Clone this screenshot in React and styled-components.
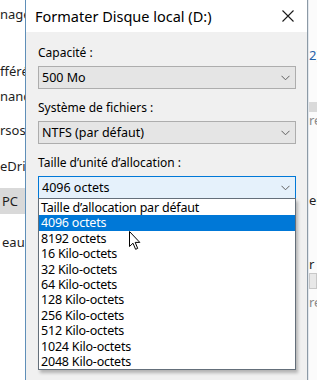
import React from "react";
import styled, { createGlobalStyle } from "styled-components";

const GlobalStyle = createGlobalStyle`
  html, body {
    margin: 0;
    padding: 0;
    background: #ffffff;
  }
  body {
    font-family: "Noto Sans", "Open Sans", sans-serif;
    color: #000;
  }
`;

const Screen = styled.div`
  display: flex;
  width: 317px;
  height: 380px;
  overflow: hidden;
  background: #ffffff;
`;

const NavPane = styled.div`
  flex: none;
  width: 25px;
  display: flex;
  flex-direction: column;
  overflow: hidden;
  background: #ffffff;
`;

const NavItem = styled.div`
  margin-top: ${(p) => p.$gap}px;
  height: ${(p) => p.$h || 20}px;
  line-height: ${(p) => p.$h || 20}px;
  padding-left: ${(p) => p.$indent || 0}px;
  white-space: nowrap;
  font-size: 13px;
  color: #1e1e1e;
  background: ${(p) => (p.$selected ? "#d9d9d9" : "transparent")};
`;

const Dialog = styled.div`
  flex: none;
  width: 281px;
  display: flex;
  flex-direction: column;
  background: #f0f0f0;
  border-left: 1px solid #5f8fb8;
  border-right: 1px solid #8c9aa6;
`;

const TitleBar = styled.div`
  height: 32px;
  flex: none;
  display: flex;
  align-items: center;
  justify-content: space-between;
  padding: 0 13px 0 9px;
  background: #ffffff;
`;

const Title = styled.div`
  font-size: 14.5px;
  color: #000;
`;

const Body = styled.div`
  padding: 2px 11px 0 12px;
`;

const Field = styled.div`
  position: relative;
  margin-top: 11px;
`;

const Label = styled.div`
  font-size: 12px;
  line-height: 16px;
  margin-bottom: 5px;
`;

const Combo = styled.div`
  height: 21px;
  display: flex;
  align-items: center;
  justify-content: space-between;
  padding: 0 5px 0 3px;
  font-size: 12.5px;
  border: 1px solid ${(p) => (p.$focused ? "#0078d7" : "#adadad")};
  background: ${(p) => (p.$focused ? "#e5f1fb" : "#e5e5e5")};
`;

const DropList = styled.div`
  position: absolute;
  top: 100%;
  left: 0;
  right: 0;
  margin-top: -1px;
  padding: 1px 0 0;
  background: #ffffff;
  border: 1px solid #646f7a;
  box-shadow: 2px 3px 3px rgba(0, 0, 0, 0.25);
  z-index: 2;
`;

const Option = styled.div`
  height: 15.4px;
  line-height: 15.4px;
  padding-left: 2px;
  font-size: 12.5px;
  letter-spacing: -0.2px;
  white-space: nowrap;
  color: ${(p) => (p.$selected ? "#ffffff" : "#000000")};
  background: ${(p) => (p.$selected ? "#0078d7" : "transparent")};
`;

const Pointer = styled.svg`
  position: absolute;
  left: 91px;
  top: 76px;
  z-index: 3;
`;

const RightPane = styled.div`
  flex: 1;
  display: flex;
  flex-direction: column;
  overflow: hidden;
  background: #fbfbfb;
  border-left: 1px solid #e3e8ee;
`;

const Bit = styled.div`
  margin-top: ${(p) => p.$gap}px;
  height: ${(p) => p.$h}px;
  line-height: ${(p) => p.$h}px;
  font-size: 13px;
  white-space: nowrap;
  color: ${(p) => p.$color || "#1e1e1e"};
  background: ${(p) => p.$bg || "transparent"};
  border: ${(p) => (p.$boxed ? "1px solid #c8c8c8" : "none")};
`;

const Chevron = () => (
  <svg width="9" height="6" viewBox="0 0 9 6">
    <path d="M0.5 0.8 L4.5 4.8 L8.5 0.8" fill="none" stroke="#606060" strokeWidth="1" />
  </svg>
);

const CloseIcon = () => (
  <svg width="12" height="12" viewBox="0 0 12 12">
    <path d="M0.5 0.5 L11.5 11.5 M11.5 0.5 L0.5 11.5" stroke="#1a1a1a" strokeWidth="1.1" />
  </svg>
);

const sizes = [
  "Taille d\u2019allocation par défaut",
  "4096 octets",
  "8192 octets",
  "16 Kilo-octets",
  "32 Kilo-octets",
  "64 Kilo-octets",
  "128 Kilo-octets",
  "256 Kilo-octets",
  "512 Kilo-octets",
  "1024 Kilo-octets",
  "2048 Kilo-octets",
];

const nav = [
  { text: "nage", gap: 4 },
  { text: "fféré", gap: 37 },
  { text: "nanc", gap: 5 },
  { text: "rsos", gap: 14 },
  { text: "eDriv", gap: 16 },
  { text: "PC", gap: 12, h: 26, selected: true, indent: 2 },
  { text: "eau", gap: 18, indent: 2 },
];

export default function App() {
  return (
    <>
      <GlobalStyle />
      <Screen>
        <NavPane>
          {nav.map((n) => (
            <NavItem key={n.text} $gap={n.gap} $h={n.h} $selected={n.selected} $indent={n.indent}>
              {n.text}
            </NavItem>
          ))}
        </NavPane>

        <Dialog>
          <TitleBar>
            <Title>Formater Disque local (D:)</Title>
            <CloseIcon />
          </TitleBar>
          <Body>
            <Field>
              <Label>Capacité :</Label>
              <Combo>
                <span>500 Mo</span>
                <Chevron />
              </Combo>
            </Field>
            <Field>
              <Label>Système de fichiers :</Label>
              <Combo>
                <span>NTFS (par défaut)</span>
                <Chevron />
              </Combo>
            </Field>
            <Field>
              <Label>Taille d’unité d’allocation :</Label>
              <Combo $focused>
                <span>4096 octets</span>
                <Chevron />
              </Combo>
              <DropList>
                {sizes.map((s) => (
                  <Option key={s} $selected={s === "4096 octets"}>
                    {s}
                  </Option>
                ))}
              </DropList>
              <Pointer width="12" height="19" viewBox="0 0 12 19">
                <path
                  d="M0.5 0.5 L0.5 15.5 L4 12.2 L6.6 18.3 L8.7 17.4 L6.2 11.4 L10.8 11.4 Z"
                  fill="#ffffff"
                  stroke="#000000"
                  strokeWidth="1"
                  strokeLinejoin="round"
                />
              </Pointer>
            </Field>
          </Body>
        </Dialog>

        <RightPane>
          <Bit $gap={48} $h={14} $color="#1f5fa8">2)</Bit>
          <Bit $gap={40} $h={10} $bg="#dadada" />
          <Bit $gap={2} $h={13} $color="#8a8a8a">re</Bit>
          <Bit $gap={66} $h={14}>er</Bit>
          <Bit $gap={50} $h={14}>r</Bit>
          <Bit $gap={2} $h={14} $bg="#e8e8e8" $boxed />
          <Bit $gap={6} $h={14} $color="#8a8a8a">re</Bit>
        </RightPane>
      </Screen>
    </>
  );
}
